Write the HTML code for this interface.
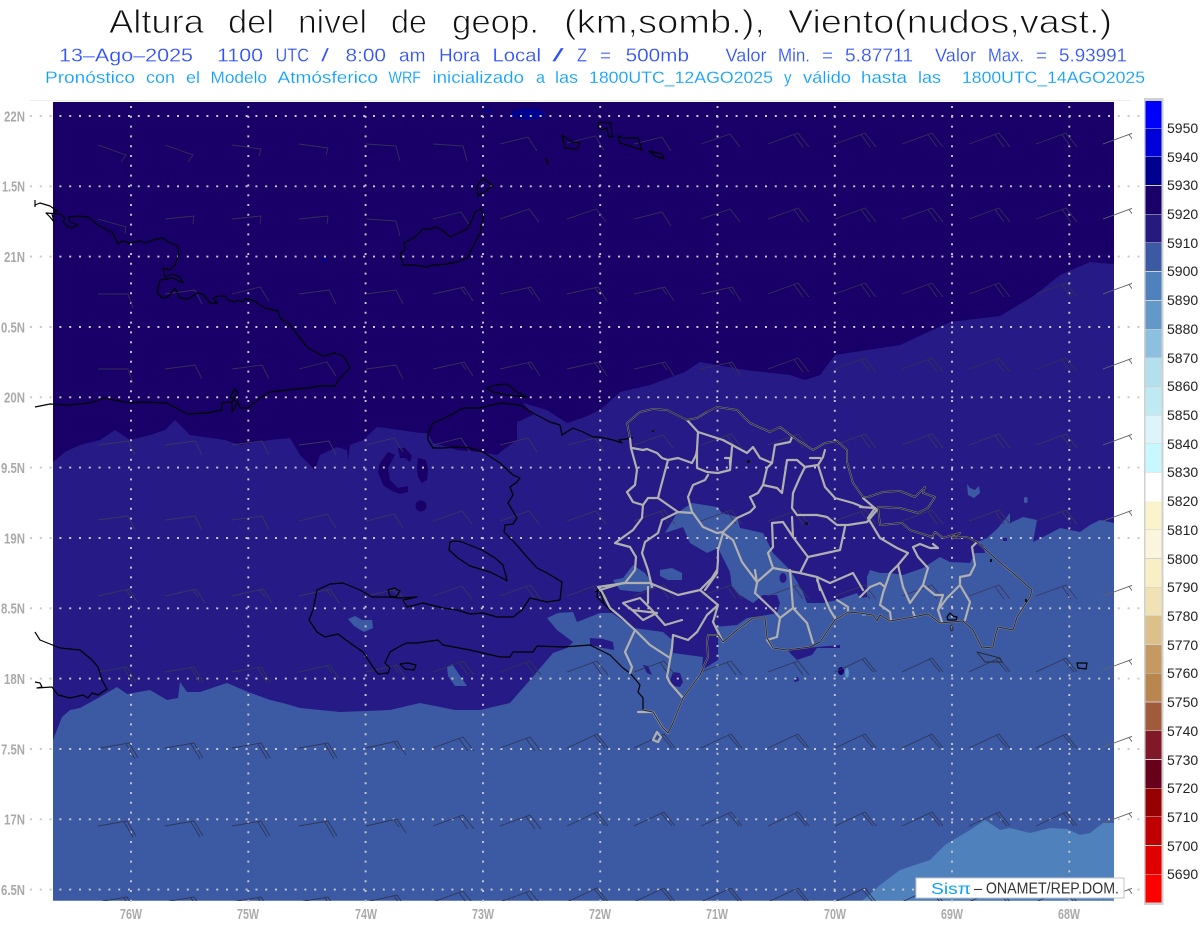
<!DOCTYPE html>
<html lang="es"><head><meta charset="utf-8"><title>Altura del nivel de geop.</title>
<style>html,body{margin:0;padding:0;background:#fff}svg{display:block}text{font-family:"Liberation Sans",sans-serif}</style></head>
<body>
<svg xmlns="http://www.w3.org/2000/svg" width="1200" height="927" viewBox="0 0 1200 927">
<defs>
<clipPath id="pl"><rect x="53" y="102" width="1061" height="799"/></clipPath>
<clipPath id="bc"><rect x="0" y="100" width="1132" height="801"/></clipPath>
<path id="a" d="M0 0L28 10l-5 7"/>
<path id="a2" d="M0 0L28 8l-1 7"/>
<path id="b" d="M0 0L29 4l-2 7"/>
<path id="j" d="M0 0L29-3l-1 8"/>
<path id="c" d="M0 0L30 2l4 15"/>
<path id="k" d="M0 0L30 0l5 14"/>
<path id="l" d="M0 0L30-4l7 14"/>
<path id="d" d="M0 0L28-7l9 14"/>
<path id="e" d="M0 0L29-10l10 13"/>
<path id="m" d="M0 0L31-7l9 14M28-6l5 7"/>
<path id="f" d="M0 0L30-11l11 14M26-9.5l9 12.5"/>
<path id="g" d="M0 0L29-5l9 15M26-4l9 15"/>
<path id="h" d="M0 0L30-14l11 14M27-13l11 13"/>
</defs>

<!-- titles -->
<g fill="#111" stroke="#fff" stroke-width=".9" font-size="33">
<text x="109" y="33" textLength="95" lengthAdjust="spacingAndGlyphs">Altura</text>
<text x="228" y="33" textLength="46" lengthAdjust="spacingAndGlyphs">del</text>
<text x="298" y="33" textLength="69" lengthAdjust="spacingAndGlyphs">nivel</text>
<text x="391" y="33" textLength="36" lengthAdjust="spacingAndGlyphs">de</text>
<text x="452" y="33" textLength="87" lengthAdjust="spacingAndGlyphs">geop.</text>
<text x="564" y="33" textLength="201" lengthAdjust="spacingAndGlyphs">(km,somb.),</text>
<text x="788" y="33" textLength="324" lengthAdjust="spacingAndGlyphs">Viento(nudos,vast.)</text>
</g>
<g fill="#2f50ff" font-size="18.500" stroke="#fff" stroke-width=".2">
<text x="59" y="61.500" textLength="134" lengthAdjust="spacingAndGlyphs">13–Ago–2025</text>
<text x="217" y="61.500" textLength="46" lengthAdjust="spacingAndGlyphs">1100</text>
<text x="275.500" y="61.500" textLength="33.500" lengthAdjust="spacingAndGlyphs">UTC</text>
<text x="321" y="61.500" textLength="8" lengthAdjust="spacingAndGlyphs">/</text>
<text x="345.500" y="61.500" textLength="40.500" lengthAdjust="spacingAndGlyphs">8:00</text>
<text x="399" y="61.500" textLength="26.500" lengthAdjust="spacingAndGlyphs">am</text>
<text x="439" y="61.500" textLength="41" lengthAdjust="spacingAndGlyphs">Hora</text>
<text x="492.500" y="61.500" textLength="48.500" lengthAdjust="spacingAndGlyphs">Local</text>
<text x="552" y="61.500" textLength="12" lengthAdjust="spacingAndGlyphs">/</text>
<text x="577" y="61.500" textLength="10" lengthAdjust="spacingAndGlyphs">Z</text>
<text x="600" y="61.500" textLength="11" lengthAdjust="spacingAndGlyphs">=</text>
<text x="625.600" y="61.500" textLength="63.400" lengthAdjust="spacingAndGlyphs">500mb</text>
<text x="725.500" y="61.500" textLength="41" lengthAdjust="spacingAndGlyphs">Valor</text>
<text x="778" y="61.500" textLength="32" lengthAdjust="spacingAndGlyphs">Min.</text>
<text x="822" y="61.500" textLength="11" lengthAdjust="spacingAndGlyphs">=</text>
<text x="845" y="61.500" textLength="68" lengthAdjust="spacingAndGlyphs">5.87711</text>
<text x="935" y="61.500" textLength="41" lengthAdjust="spacingAndGlyphs">Valor</text>
<text x="988" y="61.500" textLength="36" lengthAdjust="spacingAndGlyphs">Max.</text>
<text x="1036" y="61.500" textLength="11" lengthAdjust="spacingAndGlyphs">=</text>
<text x="1059" y="61.500" textLength="68" lengthAdjust="spacingAndGlyphs">5.93991</text>
</g>
<g fill="#0ea0ff" font-size="17" stroke="#fff" stroke-width=".15">
<text x="45" y="83" textLength="90" lengthAdjust="spacingAndGlyphs">Pronóstico</text>
<text x="146" y="83" textLength="29" lengthAdjust="spacingAndGlyphs">con</text>
<text x="186" y="83" textLength="14" lengthAdjust="spacingAndGlyphs">el</text>
<text x="210.500" y="83" textLength="56.500" lengthAdjust="spacingAndGlyphs">Modelo</text>
<text x="277.500" y="83" textLength="100.500" lengthAdjust="spacingAndGlyphs">Atmósferico</text>
<text x="388.500" y="83" textLength="32.500" lengthAdjust="spacingAndGlyphs">WRF</text>
<text x="432.500" y="83" textLength="91.500" lengthAdjust="spacingAndGlyphs">inicializado</text>
<text x="536" y="83" textLength="9" lengthAdjust="spacingAndGlyphs">a</text>
<text x="555" y="83" textLength="23" lengthAdjust="spacingAndGlyphs">las</text>
<text x="589" y="83" textLength="184" lengthAdjust="spacingAndGlyphs">1800UTC_12AGO2025</text>
<text x="784" y="83" textLength="7.500" lengthAdjust="spacingAndGlyphs">y</text>
<text x="803" y="83" textLength="48" lengthAdjust="spacingAndGlyphs">válido</text>
<text x="861" y="83" textLength="46" lengthAdjust="spacingAndGlyphs">hasta</text>
<text x="918" y="83" textLength="23" lengthAdjust="spacingAndGlyphs">las</text>
<text x="962" y="83" textLength="183" lengthAdjust="spacingAndGlyphs">1800UTC_14AGO2025</text>
</g>

<!-- plot fills -->
<rect x="30" y="100" width="1100" height="1" fill="#eee"/>
<rect x="53" y="102" width="1061" height="799" fill="#180068"/>
<g clip-path="url(#pl)">
<ellipse cx="528" cy="114" rx="17" ry="5.500" fill="#000090"/>
<ellipse cx="488" cy="111" rx="3" ry="1.500" fill="#000090"/>
<circle cx="324" cy="260" r="2" fill="#000090"/>
<path fill="#261a86" d="M53 902L53 462 65 452 80 445 100 440 115 430 130 440 150 435 165 430 175 420 190 435 225 440 240 445 270 440 290 438 300 455 315 470 320 455 337 447 347 450 348 460 350 445 363 440 377 427 400 430 420 433 428 433 433 443 457 450 480 452 497 455 503 450 517 440 517 422 533 415 523 403 547 410 567 423 585 417 600 410 620 392 650 385 685 372 700 362 745 370 790 375 805 380 820 375 835 355 900 345 950 322 1000 316 1035 295 1060 275 1090 262 1114 264 1114 902Z"/>
<g fill="#180068">
<path d="M388 452L380 463 378 472 383 485 392 491 400 494 408 492 408 486 398 488 390 480 388 468 395 455Z"/>
<path d="M418 458L426 460 428 470 427 480 422 483 418 477 417 468Z"/>
<path d="M398 448L405 448 412 456 410 462 405 458 400 458Z"/>
<circle cx="421" cy="506" r="5.500"/>
</g>
<path fill="#3c5aa4" d="M53 902L53 740 62 717 70 710 80 708 100 697 117 687 127 694 150 690 167 700 178 698 180 682 187 692 200 692 227 683 248 692 270 700 283 703 300 708 340 712 390 710 420 703 455 710 480 710 510 703 530 680 553 653 567 648 573 642 557 630 547 618 558 613 573 612 577 622 600 613 612 613 633 628 663 632 672 640 673 653 703 657 702 670 718 660 718 637 715 627 737 625 747 618 767 615 777 613 780 603 777 595 763 595 753 603 740 595 732 587 730 572 718 548 707 553 690 543 683 527 665 533 677 513 692 503 717 507 722 513 737 517 740 528 763 533 773 553 790 570 802 590 807 603 823 603 837 600 857 593 860 598 867 597 867 577 870 570 880 573 890 573 903 575 923 568 940 557 950 562 970 563 975 553 985 553 983 545 977 542 987 538 998 528 1010 513 1010 523 1023 517 1037 520 1033 542 1047 535 1060 528 1080 532 1090 525 1100 520 1114 523 1114 902Z"/>
<g fill="#3c5aa4">
<path d="M613 580L623 578 633 565 645 573 655 587 640 592 620 590Z"/>
<path d="M660 570L672 568 682 573 682 580 668 580 660 576Z"/>
<path d="M348 619L355 616 362 620 372 620 373 628 364 632 354 626Z"/>
<path d="M967 484L970 488 975 490 979 486 980 493 974 498 968 495Z"/>
<rect x="1024" y="497" width="3.500" height="6" rx="1.500"/>
<path d="M447 667L452 664 467 686 455 686 448 676Z"/>
<rect x="862" y="613" width="4" height="3" fill="#5a86c0"/>
</g>
<g fill="#261a86">
<path d="M590 638L603 639 613 642 614 650 603 648 590 645Z"/>
<path d="M787 649L817 647 840 645 840 648 817 648 812 655 797 660 790 653Z"/>
<path d="M643 665L648 666 652 675 647 673Z"/>
<path d="M673 672L680 673 683 682 680 687 673 686 670 680Z"/>
<path d="M795 677L798 677 799 681 794 682Z"/>
<ellipse cx="783" cy="578" rx="3.500" ry="5"/>
<path d="M1003 538h4v3h-4z"/>
</g>
<ellipse cx="841" cy="671" rx="3" ry="4" fill="#180068"/>
<ellipse cx="847" cy="673" rx="2" ry="5" fill="#5a90c8"/>
<path fill="#4f82bc" d="M860 902L867 897 880 885 900 870 930 860 945 845 970 830 985 820 1000 830 1010 828 1030 833 1050 828 1067 829 1080 835 1090 833 1103 823 1114 823 1114 902Z"/>
<rect x="53" y="900.500" width="1061" height="1" fill="#9fb2dc"/>
</g>

<!-- grid -->
<g stroke="#c8c8c8" stroke-width="1.900" stroke-dasharray="2 7.800" fill="none">
<path d="M30 116H1140M30 186.300H1140M30 256.600H1140M30 327H1140M30 397.300H1140M30 467.600H1140M30 538H1140M30 608.300H1140M30 678.600H1140M30 749H1140M30 819.300H1140M30 889.600H1140"/>
<path d="M131 106V903M248.300 106V903M365.600 106V903M483 106V903M600.200 106V903M717.500 106V903M834.800 106V903M952 106V903M1069.300 106V903"/>
</g>

<!-- wind barbs -->
<g clip-path="url(#bc)" fill="none" stroke-width=".9">
<g stroke="#352f58">
<use href="#a" x="98" y="145"/><use href="#a" x="165" y="145"/><use href="#b" x="232" y="145"/><use href="#b" x="299" y="144"/><use href="#c" x="366" y="144"/><use href="#c" x="433" y="144"/><use href="#d" x="500" y="144"/><use href="#d" x="567" y="143"/><use href="#d" x="634" y="144"/><use href="#e" x="701" y="144"/><use href="#f" x="768" y="144"/><use href="#f" x="835" y="144"/><use href="#f" x="902" y="144"/><use href="#f" x="969" y="144"/><use href="#f" x="1036" y="144"/>
<use href="#a2" x="98" y="219"/><use href="#j" x="165" y="219"/><use href="#j" x="232" y="219"/><use href="#j" x="299" y="219"/><use href="#c" x="366" y="219"/><use href="#d" x="433" y="219"/><use href="#e" x="500" y="219"/><use href="#e" x="567" y="219"/><use href="#d" x="634" y="219"/><use href="#e" x="701" y="219"/><use href="#f" x="768" y="219"/><use href="#f" x="835" y="219"/><use href="#f" x="902" y="219"/><use href="#f" x="969" y="219"/><use href="#f" x="1036" y="219"/>
<use href="#k" x="98" y="294"/><use href="#l" x="165" y="294"/><use href="#d" x="232" y="294"/><use href="#l" x="299" y="294"/><use href="#l" x="366" y="294"/><use href="#m" x="433" y="294"/><use href="#m" x="500" y="294"/><use href="#m" x="567" y="294"/><use href="#m" x="634" y="294"/><use href="#m" x="701" y="294"/><use href="#f" x="768" y="294"/><use href="#f" x="835" y="294"/><use href="#f" x="902" y="294"/><use href="#f" x="969" y="294"/><use href="#f" x="1036" y="294"/>
<use href="#k" x="98" y="369"/><use href="#l" x="165" y="369"/><use href="#l" x="232" y="369"/><use href="#d" x="299" y="369"/><use href="#l" x="366" y="369"/><use href="#m" x="433" y="369"/><use href="#m" x="500" y="369"/><use href="#m" x="567" y="369"/><use href="#m" x="634" y="369"/><use href="#m" x="701" y="369"/><use href="#f" x="768" y="369"/><use href="#f" x="835" y="369"/><use href="#f" x="902" y="369"/><use href="#f" x="969" y="369"/><use href="#f" x="1036" y="369"/>
</g>
<g stroke="#3a3660">
<use href="#l" x="98" y="445"/><use href="#l" x="165" y="445"/><use href="#l" x="232" y="445"/><use href="#l" x="299" y="445"/><use href="#d" x="366" y="445"/><use href="#d" x="433" y="445"/><use href="#d" x="500" y="445"/><use href="#d" x="567" y="445"/><use href="#e" x="634" y="445"/><use href="#f" x="701" y="445"/><use href="#f" x="768" y="445"/><use href="#f" x="835" y="445"/><use href="#f" x="902" y="445"/><use href="#f" x="969" y="445"/><use href="#f" x="1036" y="445"/>
<use href="#l" x="98" y="520"/><use href="#l" x="165" y="520"/><use href="#l" x="232" y="520"/><use href="#d" x="299" y="521"/><use href="#d" x="366" y="521"/><use href="#e" x="433" y="521"/><use href="#e" x="500" y="521"/><use href="#e" x="567" y="521"/><use href="#f" x="634" y="521"/><use href="#f" x="701" y="521"/><use href="#f" x="768" y="521"/><use href="#f" x="835" y="521"/><use href="#f" x="902" y="521"/><use href="#f" x="969" y="521"/><use href="#f" x="1036" y="521"/>
<use href="#m" x="98" y="596"/><use href="#m" x="165" y="596"/><use href="#m" x="232" y="596"/><use href="#m" x="299" y="596"/><use href="#m" x="366" y="596"/><use href="#e" x="433" y="596"/><use href="#f" x="500" y="596"/><use href="#f" x="567" y="596"/><use href="#f" x="634" y="596"/><use href="#f" x="701" y="596"/><use href="#f" x="768" y="596"/><use href="#f" x="835" y="596"/><use href="#f" x="902" y="596"/><use href="#f" x="969" y="596"/><use href="#f" x="1036" y="596"/>
</g>
<g stroke="#2f3658">
<use href="#g" x="98" y="672"/><use href="#g" x="165" y="672"/><use href="#g" x="232" y="672"/><use href="#m" x="299" y="672"/><use href="#m" x="366" y="672"/><use href="#f" x="433" y="672"/><use href="#f" x="500" y="672"/><use href="#f" x="567" y="672"/><use href="#f" x="634" y="672"/><use href="#f" x="701" y="672"/><use href="#f" x="768" y="672"/><use href="#h" x="835" y="672"/><use href="#h" x="902" y="672"/><use href="#h" x="969" y="672"/><use href="#h" x="1036" y="672"/>
<use href="#g" x="100" y="748"/><use href="#g" x="165" y="748"/><use href="#g" x="232" y="748"/><use href="#g" x="299" y="748"/><use href="#m" x="366" y="748"/><use href="#f" x="433" y="748"/><use href="#f" x="500" y="748"/><use href="#h" x="567" y="748"/><use href="#h" x="634" y="748"/><use href="#h" x="701" y="748"/><use href="#h" x="768" y="748"/><use href="#h" x="835" y="748"/><use href="#h" x="902" y="748"/><use href="#h" x="969" y="748"/><use href="#h" x="1036" y="748"/>
<use href="#g" x="98" y="826"/><use href="#g" x="165" y="826"/><use href="#g" x="232" y="826"/><use href="#g" x="299" y="826"/><use href="#m" x="366" y="826"/><use href="#f" x="433" y="826"/><use href="#f" x="500" y="826"/><use href="#h" x="567" y="826"/><use href="#h" x="634" y="826"/><use href="#h" x="701" y="826"/><use href="#h" x="768" y="826"/><use href="#h" x="835" y="826"/><use href="#h" x="902" y="826"/><use href="#h" x="969" y="826"/><use href="#h" x="1036" y="826"/>
<use href="#g" x="98" y="902"/><use href="#g" x="165" y="902"/><use href="#g" x="232" y="902"/><use href="#g" x="299" y="902"/><use href="#m" x="366" y="902"/><use href="#f" x="433" y="902"/><use href="#f" x="500" y="902"/><use href="#h" x="567" y="902"/><use href="#h" x="634" y="902"/><use href="#h" x="701" y="902"/><use href="#h" x="768" y="902"/><use href="#h" x="835" y="902"/><use href="#h" x="902" y="902"/><use href="#h" x="969" y="902"/><use href="#h" x="1036" y="902"/>
</g>
<g stroke="#626268">
<use href="#f" x="1103" y="144"/><use href="#f" x="1103" y="219"/><use href="#f" x="1103" y="294"/><use href="#f" x="1103" y="369"/><use href="#f" x="1103" y="445"/><use href="#f" x="1103" y="521"/><use href="#f" x="1103" y="596"/><use href="#f" x="1103" y="670"/><use href="#f" x="1103" y="747"/><use href="#f" x="1103" y="823"/><use href="#f" x="1103" y="899"/>
</g>
</g>

<!-- coastlines: Cuba, Bahamas, Jamaica, Haiti -->
<g fill="none" stroke="#000" stroke-width="1.200" stroke-linejoin="round">
<path d="M35 200V207M35 205L40 203 50 206 57 211 52 214 54 222 50 217 46 213 60 214 65 218 63 222 68 227 72 228 78 225 70 222 69 217 78 216 88 217 98 225 113 233 116 240 118 244 122 241 130 243 140 241 145 243 153 240 162 238 170 243 178 246 179 255 175 265 170 270 163 268 165 277 173 274 180 277 183 283 173 278 160 280 157 292 162 298 168 297 175 288 180 298 188 299 197 293 203 294 210 303 217 303 213 298 218 296 225 296 228 300 235 302 238 300 242 302 245 299 252 300 265 308 278 311 280 318 290 325 300 338 308 348 323 356 335 353 343 356 348 363 350 368 340 378 335 386 320 386 307 388 287 390 270 392 260 398 248 408 240 408 238 402 232 412 232 402 222 403 222 410 207 413 187 414 167 403 143 402 130 403 103 398 90 403 67 405 50 404 35 407M232 402L238 393 235 389 230 397 238 402"/>
<path d="M400 253L405 250 404 243 415 237 423 229 430 229 436 227 442 230 450 237 467 229 473 218 475 212 481 209 483 217 480 233 467 258 457 262 447 264 433 265 427 267 413 265 403 265Z"/>
<path d="M477 186L483 178 493 186 478 196Z"/>
<path d="M562 135L572 142 580 143 577 149 565 148Z"/>
<path d="M546 158L548 165" stroke-width="1.500"/>
<path d="M598 123L603 122 611 123 612 135 613 137 608 136 607 128 602 130 598 127Z"/>
<path d="M618 136L623 138 638 138 642 150 633 147 620 143Z"/>
<path d="M649 151L662 154 664 159 655 156Z"/>
<path d="M35 632L40 640 60 648 80 650 92 660 98 667 102 680 107 689 98 695 92 693 88 698 83 695 70 698 58 695 52 687 37 688 42 687 40 683 35 682"/>
<path d="M487 388L495 385 507 384 517 392 527 397 507 395 493 392Z"/>
<path d="M428 440L428 433 433 423 447 417 463 408 480 408 500 403 520 405 533 413 550 422 560 425 562 435 573 428 583 432 593 437 600 437 613 440 622 443 619 440 633 438"/>
<path d="M428 440L433 448 443 448 457 447 470 448 483 452 500 463 513 475 520 478 517 482 510 487 513 495 508 503 517 518 513 524 505 525 504 532 515 543 527 557 537 568 547 573 562 582 560 600 547 602 530 598 522 610 513 617 497 617 483 613 470 614 457 610 443 608 423 603 407 607 403 600 417 597 400 598 387 597 372 597 360 590 343 583 330 584 317 590 313 610 309 620 317 632 325 637 338 634 350 643 363 652 373 667 378 674 388 673 390 668 385 663 390 652 402 645 407 643 417 643 438 640 443 645 470 650 500 657 510 657 513 652 533 652 537 646 563 647 590 645 600 650 610 655 623 668 630 673 640 685 638 692 643 698 643 710"/>
<path d="M450 542C453 541 458 541 462 542L482 550 495 558 503 565 506 576 507 581 504 579 490 572 470 566 458 558 449 550Z"/>
<path d="M388 590L394 588 400 591 396 597 390 596Z"/>
<path d="M400 664L408 663 416 665 414 670 405 669Z"/>
<path d="M1077 663L1087 663 1086 669 1078 668Z"/>
<path d="M947 617L950 613 953 616 957 617 956 620 948 620Z"/>
<path d="M595 592L600 590 604 604 612 612M598 588L597 597 607 607 612 609"/>
</g>

<!-- provinces -->
<g fill="none" stroke="#b0b0b0" stroke-width="2.200" stroke-linejoin="round" stroke-linecap="round">
<path d="M630 438L631 448 637 470 635 485 627 492 633 502 643 505 642 518 633 530 615 543 630 547 636 557 635 570 625 583 598 587 602 592 610 608 622 618 635 630 625 652 632 667 630 673"/>
<path d="M632 448L643 450 647 449 657 453 662 458 668 460 678 458 692 463 696 455 697 450 698 432 687 420"/>
<path d="M698 432L723 440 747 453 753 447 760 458 772 463 775 445 790 442 792 437"/>
<path d="M668 460L660 490 658 498 648 498 643 505"/>
<path d="M658 498L678 512 693 513 703 527 717 533 723 532 737 518 750 512 755 507 750 497 758 493 763 485 767 468 772 463"/>
<path d="M697 450V468L707 472 718 473 730 470 732 447M725 458H730V465"/>
<path d="M708 475L705 480 693 485 688 497 692 512"/>
<path d="M763 485L777 488 782 493 787 460 797 460 805 467 818 465 823 457 825 450M810 458L820 458"/>
<path d="M805 467L800 477 793 493 792 508 797 515 817 515 827 517 837 525 848 525 867 522 877 510 863 498"/>
<path d="M818 465L825 487 835 498 853 503 863 507"/>
<path d="M792 517L793 537 808 557 840 550 845 527"/>
<path d="M772 523L783 522 793 537M772 523L773 547 768 553 773 568 757 582 742 562 733 540 723 533 718 550 718 560 717 573 705 590"/>
<path d="M678 512L662 520 658 533 645 542 642 553 648 570 652 587"/>
<path d="M808 557L800 573 817 577 830 583 853 573 863 590M817 577L820 590M817 580L830 610 835 618M837 600L848 607 848 612"/>
<path d="M773 568L800 573"/>
<path d="M755 570L757 583 755 593 775 612 780 618 777 637 767 640 773 648M780 618L793 608 790 570M793 608L807 623 813 643"/>
<path d="M600 590L623 583 650 583 678 595 700 590 712 578 717 570"/>
<path d="M700 590L718 605 707 615 697 632 688 640 673 635 672 648 667 677 670 683 683 698M718 605L713 622 723 642"/>
<path d="M682 620L665 625 650 608 640 598 623 603 632 610 657 613 643 620 630 608M648 587V603"/>
<path d="M635 630L650 645 670 658 672 648"/>
<path d="M638 712L653 712 662 727 668 733"/>
<path d="M653 740L657 732 661 737 658 742Z"/>
<path d="M860 507L875 508 868 518 880 538 897 548 908 553 898 565 890 573 883 593 880 605 890 612 891 620M898 565L903 587 910 603 923 585 928 568 918 557 913 547 920 544 930 548 938 548 933 544M923 585L935 595 943 595 938 610 942 622M960 585L970 602 965 620M960 585L947 598 938 610M960 585V577L970 575 975 565 972 547 977 542M913 612L915 617M860 597L870 587 880 583 885 587 883 593"/>
</g>
<!-- DR coast -->
<g fill="none" stroke-linejoin="round">
<path stroke="#9a9aa4" stroke-width="1.800" d="M643 710L653 712 662 727 668 733 673 723 683 698 700 675 708 657 707 642 708 635 718 635 723 642 737 630 753 618 765 618 767 638 773 648 787 650 810 647 820 642 835 620 848 612 860 613 873 615 877 621 880 615 890 621 913 617 928 614 940 623 963 621 973 630 982 648 993 647 995 637 998 627 1013 630 1017 617 1030 597 1032 590 1013 573 1003 565 977 542 967 537 952 538 960 533 943 538 935 532 932 537 910 530 902 523 880 525 878 507 900 508 918 513 928 508 935 497 923 493 925 487 915 497 900 491 883 492 868 497 863 497 853 483 847 462 847 450 837 441 825 443 813 450 793 437 780 427 770 432 750 423 737 410 717 407 707 412 697 418 687 420 667 410 653 409 640 412 627 423 630 438"/>
<path stroke="#26262c" stroke-width="1" d="M643 710L653 712 662 727 668 733 673 723 683 698 700 675 708 657 707 642 708 635 718 635 723 642 737 630 753 618 765 618 767 638 773 648 787 650 810 647 820 642 835 620 848 612 860 613 873 615 877 621 880 615 890 621 913 617 928 614 940 623 963 621 973 630 982 648 993 647 995 637 998 627 1013 630 1017 617 1030 597 1032 590 1013 573 1003 565 977 542 967 537 952 538 960 533 943 538 935 532 932 537 910 530 902 523 880 525 878 507 900 508 918 513 928 508 935 497 923 493 925 487 915 497 900 491 883 492 868 497 863 497 853 483 847 462 847 450 837 441 825 443 813 450 793 437 780 427 770 432 750 423 737 410 717 407 707 412 697 418 687 420 667 410 653 409 640 412 627 423 630 438"/>
<path stroke="#2a2a30" stroke-width="1" d="M977 652L1000 658 1002 662 985 662Z"/>
<path stroke="#2a2a30" stroke-width=".9" d="M950 627L952 625 953 630 951 631Z"/>
</g>
<g fill="#111"><rect x="990" y="559" width="2" height="3"/><rect x="1025" y="599" width="2" height="3"/><rect x="652" y="430" width="2" height="2"/><rect x="747" y="460" width="3" height="3"/><rect x="805" y="522" width="3" height="3"/></g>

<!-- axis labels -->
<g fill="#aaa" font-size="15" font-weight="bold" text-anchor="end">
<text x="25" y="121.500" textLength="21" lengthAdjust="spacingAndGlyphs">22N</text>
<text x="25" y="191.500" textLength="23" lengthAdjust="spacingAndGlyphs">1.5N</text>
<text x="25" y="262" textLength="21" lengthAdjust="spacingAndGlyphs">21N</text>
<text x="25" y="332.500" textLength="24" lengthAdjust="spacingAndGlyphs">0.5N</text>
<text x="25" y="402.500" textLength="21" lengthAdjust="spacingAndGlyphs">20N</text>
<text x="25" y="473" textLength="24" lengthAdjust="spacingAndGlyphs">9.5N</text>
<text x="25" y="543.500" textLength="21" lengthAdjust="spacingAndGlyphs">19N</text>
<text x="25" y="613.500" textLength="24" lengthAdjust="spacingAndGlyphs">8.5N</text>
<text x="25" y="684" textLength="21" lengthAdjust="spacingAndGlyphs">18N</text>
<text x="25" y="754.500" textLength="24" lengthAdjust="spacingAndGlyphs">7.5N</text>
<text x="25" y="824.500" textLength="21" lengthAdjust="spacingAndGlyphs">17N</text>
<text x="25" y="895" textLength="24" lengthAdjust="spacingAndGlyphs">6.5N</text>
</g>
<g fill="#aaa" font-size="15" font-weight="bold">
<text x="120" y="919" textLength="22" lengthAdjust="spacingAndGlyphs">76W</text>
<text x="237" y="919" textLength="22" lengthAdjust="spacingAndGlyphs">75W</text>
<text x="355" y="919" textLength="22" lengthAdjust="spacingAndGlyphs">74W</text>
<text x="472" y="919" textLength="22" lengthAdjust="spacingAndGlyphs">73W</text>
<text x="589" y="919" textLength="22" lengthAdjust="spacingAndGlyphs">72W</text>
<text x="706" y="919" textLength="22" lengthAdjust="spacingAndGlyphs">71W</text>
<text x="824" y="919" textLength="22" lengthAdjust="spacingAndGlyphs">70W</text>
<text x="941" y="919" textLength="22" lengthAdjust="spacingAndGlyphs">69W</text>
<text x="1058" y="919" textLength="22" lengthAdjust="spacingAndGlyphs">68W</text>
</g>

<!-- colour bar -->
<rect x="1144" y="98" width="19.500" height="807" fill="#d0d0d0"/>
<g>
<rect x="1145.500" y="101" width="16" height="27" fill="#0000ff"/>
<rect x="1145.500" y="128.500" width="16" height="28" fill="#0000d8"/>
<rect x="1145.500" y="157" width="16" height="28" fill="#000090"/>
<rect x="1145.500" y="186" width="16" height="28" fill="#180068"/>
<rect x="1145.500" y="214.500" width="16" height="28" fill="#261a80"/>
<rect x="1145.500" y="243" width="16" height="28" fill="#3c5aa4"/>
<rect x="1145.500" y="272" width="16" height="28" fill="#4f82bc"/>
<rect x="1145.500" y="301" width="16" height="28" fill="#6299c9"/>
<rect x="1145.500" y="329.500" width="16" height="28" fill="#8cbfe0"/>
<rect x="1145.500" y="358" width="16" height="28" fill="#b4e0ee"/>
<rect x="1145.500" y="387" width="16" height="28" fill="#bfeaf4"/>
<rect x="1145.500" y="415.500" width="16" height="28" fill="#dcf4fa"/>
<rect x="1145.500" y="444" width="16" height="28" fill="#c8f8ff"/>
<rect x="1145.500" y="472.500" width="16" height="29" fill="#ffffff"/>
<rect x="1145.500" y="501.500" width="16" height="28" fill="#faf4cc"/>
<rect x="1145.500" y="530" width="16" height="28" fill="#fbf5de"/>
<rect x="1145.500" y="559" width="16" height="28" fill="#f9efc4"/>
<rect x="1145.500" y="587.500" width="16" height="28" fill="#f0e2b4"/>
<rect x="1145.500" y="616" width="16" height="28" fill="#dcc08a"/>
<rect x="1145.500" y="645" width="16" height="28" fill="#c49a62"/>
<rect x="1145.500" y="673.500" width="16" height="28" fill="#b98650"/>
<rect x="1145.500" y="702.500" width="16" height="28" fill="#a05a3c"/>
<rect x="1145.500" y="731" width="16" height="28" fill="#801828"/>
<rect x="1145.500" y="760" width="16" height="28" fill="#68001c"/>
<rect x="1145.500" y="788.500" width="16" height="28" fill="#960000"/>
<rect x="1145.500" y="817" width="16" height="28" fill="#c00000"/>
<rect x="1145.500" y="846" width="16" height="28" fill="#e00000"/>
<rect x="1145.500" y="874.500" width="16" height="28" fill="#ff0000"/>
</g>
<g fill="#222" font-size="14">
<text x="1167" y="133">5950</text><text x="1167" y="162">5940</text><text x="1167" y="190">5930</text><text x="1167" y="219">5920</text><text x="1167" y="248">5910</text><text x="1167" y="276">5900</text><text x="1167" y="305">5890</text><text x="1167" y="334">5880</text><text x="1167" y="363">5870</text><text x="1167" y="391">5860</text><text x="1167" y="420">5850</text><text x="1167" y="449">5840</text><text x="1167" y="477">5830</text><text x="1167" y="506">5820</text><text x="1167" y="535">5810</text><text x="1167" y="564">5800</text><text x="1167" y="592">5790</text><text x="1167" y="621">5780</text><text x="1167" y="650">5770</text><text x="1167" y="678">5760</text><text x="1167" y="707">5750</text><text x="1167" y="736">5740</text><text x="1167" y="765">5730</text><text x="1167" y="793">5720</text><text x="1167" y="822">5710</text><text x="1167" y="851">5700</text><text x="1167" y="879">5690</text>
</g>

<!-- logo -->
<rect x="916" y="878" width="208" height="20" fill="#fff" stroke="#c4c4c4" stroke-width="1"/>
<text x="931" y="894" font-size="16" fill="#0ea0ff" textLength="40" lengthAdjust="spacingAndGlyphs">Sisπ</text>
<text x="974" y="893.500" font-size="15.500" fill="#333" textLength="145" lengthAdjust="spacingAndGlyphs">– ONAMET/REP.DOM.</text>
</svg>
</body></html>
